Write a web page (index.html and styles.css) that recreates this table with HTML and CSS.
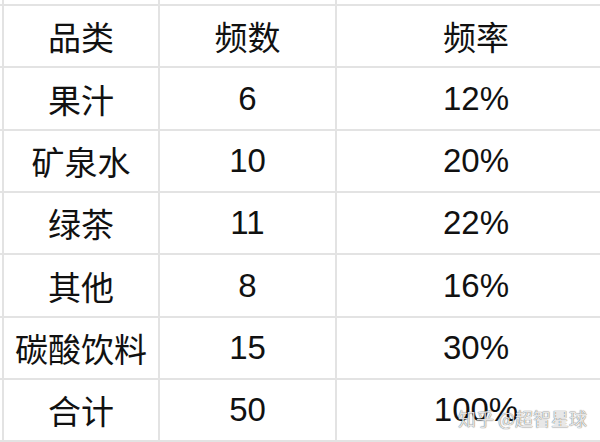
FILE: index.html
```html
<!DOCTYPE html>
<html lang="zh">
<head>
<meta charset="utf-8">
<link rel="stylesheet" href="styles.css">
</head>
<body>
<div class="grid">
  <div class="c"></div><div class="c"></div><div class="c"></div><div class="c"></div>
  <div class="c"></div><div class="c">品类</div><div class="c">频数</div><div class="c">频率</div>
  <div class="c"></div><div class="c">果汁</div><div class="c">6</div><div class="c">12%</div>
  <div class="c"></div><div class="c">矿泉水</div><div class="c">10</div><div class="c">20%</div>
  <div class="c"></div><div class="c">绿茶</div><div class="c">11</div><div class="c">22%</div>
  <div class="c"></div><div class="c">其他</div><div class="c">8</div><div class="c">16%</div>
  <div class="c"></div><div class="c">碳酸饮料</div><div class="c">15</div><div class="c">30%</div>
  <div class="c"></div><div class="c">合计</div><div class="c">50</div><div class="c">100%</div>
</div>
<div class="watermark">知乎 @超智星球</div>
</body>
</html>
```
FILE: styles.css
```css
html, body {
  margin: 0;
  padding: 0;
  width: 600px;
  height: 442px;
  overflow: hidden;
  background: #fff;
}
body {
  position: relative;
  font-family: "Liberation Sans", "Noto Sans CJK SC", sans-serif;
}
.grid {
  display: grid;
  grid-template-columns: 12px 154px 175px 278px;
  grid-template-rows: 62px 60px 61px 60px 60px 61px 60px 60px;
  gap: 2px;
  padding-bottom: 2px;
  background: #e3e3e3;
  margin: -58px 0 0 -10px;
  width: max-content;
}
.c {
  background: #fff;
  display: flex;
  align-items: center;
  justify-content: center;
  font-size: 33px;
  color: #111;
  white-space: nowrap;
}
.watermark {
  position: absolute;
  left: 458px;
  top: 405px;
  font-size: 18px;
  line-height: 26px;
  font-family: "Noto Sans CJK SC", sans-serif;
  color: rgba(255, 255, 255, 0.85);
  text-shadow: 0 0 1px rgba(0, 0, 0, 0.55), 0 0 1px rgba(0, 0, 0, 0.35);
  white-space: nowrap;
}
```
